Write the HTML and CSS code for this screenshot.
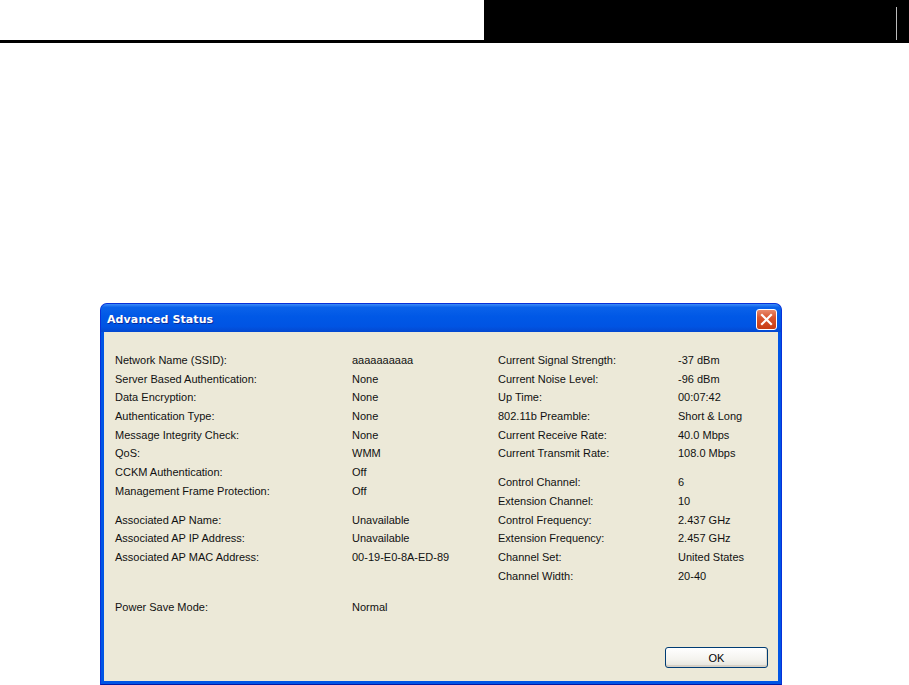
FILE: index.html
```html
<!DOCTYPE html>
<html lang="en">
<head>
    <meta charset="UTF-8">
    <title>Advanced Status</title>
    <link rel="stylesheet" href="styles.css">
</head>
<body>
    <div class="page-head">
        <div class="head-left"></div>
        <div class="head-right"><span class="head-rule"></span></div>
    </div>

    <div class="window">
        <div class="title-bar">
            <span class="title">Advanced Status</span>
            <button class="close-btn" aria-label="Close">
                <svg width="13" height="13" viewBox="0 0 13 13">
                    <path d="M2 2 L11 11 M11 2 L2 11" stroke="#fff" stroke-width="2.2" stroke-linecap="square"/>
                </svg>
            </button>
        </div>

        <div class="dialog-body">
            <div class="columns">
                <!-- colonne gauche -->
                <div class="col col-left">
                    <div class="group">
                        <div class="row"><span class="label">Network Name (SSID):</span><span class="value">aaaaaaaaaa</span></div>
                        <div class="row"><span class="label">Server Based Authentication:</span><span class="value">None</span></div>
                        <div class="row"><span class="label">Data Encryption:</span><span class="value">None</span></div>
                        <div class="row"><span class="label">Authentication Type:</span><span class="value">None</span></div>
                        <div class="row"><span class="label">Message Integrity Check:</span><span class="value">None</span></div>
                        <div class="row"><span class="label">QoS:</span><span class="value">WMM</span></div>
                        <div class="row"><span class="label">CCKM Authentication:</span><span class="value">Off</span></div>
                        <div class="row"><span class="label">Management Frame Protection:</span><span class="value">Off</span></div>
                    </div>
                    <div class="group">
                        <div class="row"><span class="label">Associated AP Name:</span><span class="value">Unavailable</span></div>
                        <div class="row"><span class="label">Associated AP IP Address:</span><span class="value">Unavailable</span></div>
                        <div class="row"><span class="label">Associated AP MAC Address:</span><span class="value">00-19-E0-8A-ED-89</span></div>
                    </div>
                    <div class="group group-far">
                        <div class="row"><span class="label">Power Save Mode:</span><span class="value">Normal</span></div>
                    </div>
                </div>

                <!-- colonne droite -->
                <div class="col col-right">
                    <div class="group">
                        <div class="row"><span class="label">Current Signal Strength:</span><span class="value">-37 dBm</span></div>
                        <div class="row"><span class="label">Current Noise Level:</span><span class="value">-96 dBm</span></div>
                        <div class="row"><span class="label">Up Time:</span><span class="value">00:07:42</span></div>
                        <div class="row"><span class="label">802.11b Preamble:</span><span class="value">Short &amp; Long</span></div>
                        <div class="row"><span class="label">Current Receive Rate:</span><span class="value">40.0 Mbps</span></div>
                        <div class="row"><span class="label">Current Transmit Rate:</span><span class="value">108.0 Mbps</span></div>
                    </div>
                    <div class="group">
                        <div class="row"><span class="label">Control Channel:</span><span class="value">6</span></div>
                        <div class="row"><span class="label">Extension Channel:</span><span class="value">10</span></div>
                        <div class="row"><span class="label">Control Frequency:</span><span class="value">2.437 GHz</span></div>
                        <div class="row"><span class="label">Extension Frequency:</span><span class="value">2.457 GHz</span></div>
                        <div class="row"><span class="label">Channel Set:</span><span class="value">United States</span></div>
                        <div class="row"><span class="label">Channel Width:</span><span class="value">20-40</span></div>
                    </div>
                </div>
            </div>

            <div class="dialog-foot">
                <button class="ok-btn">OK</button>
            </div>
        </div>
    </div>
</body>
</html>
```

FILE: styles.css
```css
body {
    margin: 0;
    padding: 0;
    background-color: #fff;
    font-family: 'Liberation Sans', Arial, sans-serif;
    overflow: hidden;
}
.page-head {
    display: flex;
    height: 43px;
}
.head-left {
    flex: 0 0 484px;
    box-sizing: border-box;
    border-bottom: 3px solid #000;
}
.head-right {
    flex: 1;
    background-color: #000;
    display: flex;
    justify-content: flex-end;
    padding-right: 12px;
}
.head-rule {
    width: 1px;
    height: 33px;
    margin-top: 7px;
    background-color: #bbb;
}
.window {
    margin: 260px 0 0 100px;
    width: 682px;
    height: 382px;
    box-sizing: border-box;
    display: flex;
    flex-direction: column;
    border: 1px solid #0831d9;
    border-bottom-color: #0019a8;
    border-radius: 7px 7px 0 0;
    background-color: #0055e5;
    overflow: hidden;
}
.title-bar {
    height: 28px;
    flex: 0 0 28px;
    display: flex;
    align-items: center;
    justify-content: space-between;
    padding: 0 4px 0 6px;
    background: linear-gradient(to bottom, #3c8cf8 0%, #0a62ea 12%, #0058e6 45%, #0054e3 80%, #0348d0 100%);
}
.title {
    color: #fff;
    font-family: 'DejaVu Sans', Verdana, sans-serif;
    font-weight: bold;
    font-size: 11px;
    letter-spacing: 0.1px;
    text-shadow: 1px 1px 0 #0a2a9a;
    margin-top: 3px;
}
.close-btn {
    width: 21px;
    height: 21px;
    padding: 0;
    margin-top: 2px;
    border: 1px solid #fff;
    border-radius: 3px;
    background: linear-gradient(to bottom, #e88a6c 0%, #d9552e 40%, #c83c14 100%);
    display: flex;
    align-items: center;
    justify-content: center;
}
.dialog-body {
    flex: 1;
    display: flex;
    flex-direction: column;
    margin: 0 3px 3px;
    background-color: #ece9d8;
    font-size: 11px;
    color: #111;
}
.columns {
    display: flex;
    padding: 19px 0 0 11px;
}
.col-left {
    width: 383px;
}
.col-left .label {
    width: 237px;
}
.col-right .label {
    width: 180px;
}
.group + .group {
    margin-top: 10px;
}
.group-far {
    margin-top: 31px !important;
}
.row {
    display: flex;
    height: 18.7px;
    line-height: 18.7px;
    white-space: nowrap;
}
.label {
    flex: 0 0 auto;
}
.dialog-foot {
    margin-top: auto;
    display: flex;
    justify-content: flex-end;
    padding: 0 10px 13px 0;
}
.ok-btn {
    width: 103px;
    height: 21px;
    padding: 0;
    font-family: 'Liberation Sans', Arial, sans-serif;
    font-size: 11px;
    color: #000;
    border: 1px solid #003c74;
    border-radius: 3px;
    background: linear-gradient(to bottom, #fff 0%, #f4f3ee 60%, #e3e2da 100%);
    box-shadow: inset 0 -2px 0 #d6d0c5, inset -1px 0 0 #e0ddd2;
}
```
